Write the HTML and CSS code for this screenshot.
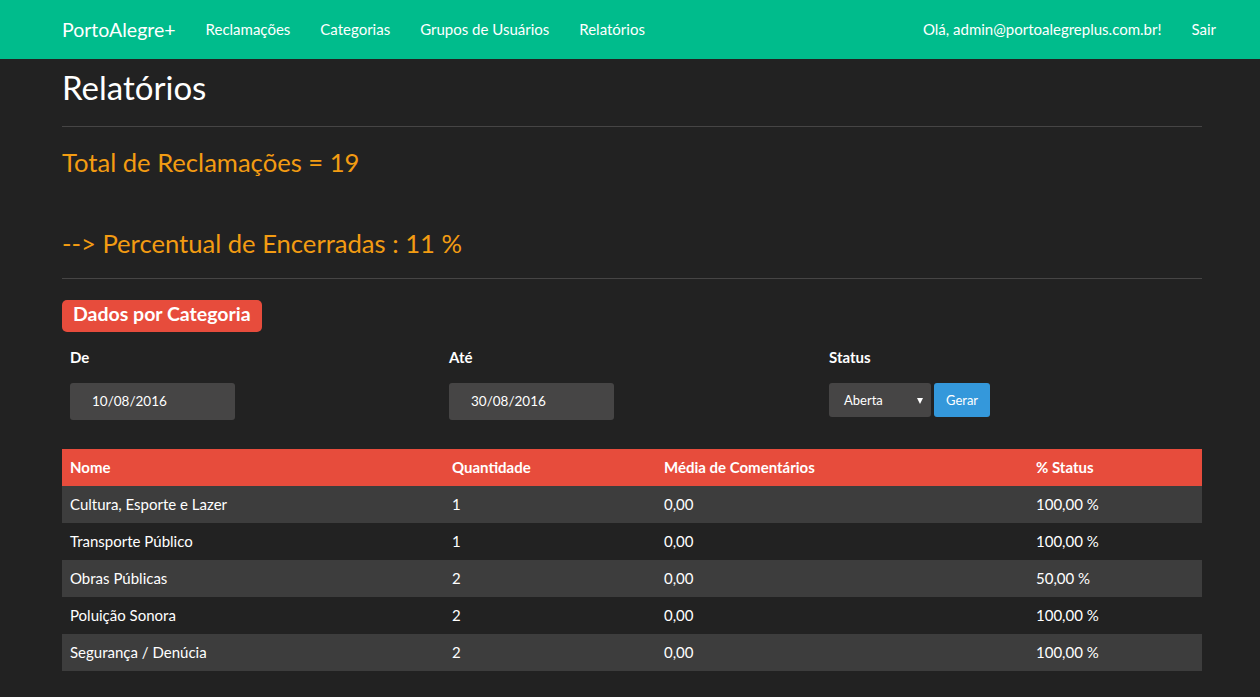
FILE: index.html
```html
<!DOCTYPE html>
<html lang="pt-BR">
<head>
<meta charset="utf-8">
<title>Relatórios</title>
<link rel="stylesheet" href="styles.css">
</head>
<body>
<nav class="navbar">
  <div class="nav-inner">
    <a class="brand" href="#">PortoAlegre+</a>
    <ul class="nav">
      <li><a href="#">Reclamações</a></li>
      <li><a href="#">Categorias</a></li>
      <li><a href="#">Grupos de Usuários</a></li>
      <li><a href="#">Relatórios</a></li>
    </ul>
    <ul class="nav nav-right">
      <li><a href="#">Olá, admin@portoalegreplus.com.br!</a></li>
      <li><a href="#">Sair</a></li>
    </ul>
  </div>
</nav>
<main class="container">
  <h1 class="page-title">Relatórios</h1>
  <hr class="rule rule-top">
  <h3 class="stat">Total de Reclamações = 19</h3>
  <h3 class="stat stat-second">--&gt; Percentual de Encerradas : 11 %</h3>
  <hr class="rule rule-mid">
  <h3 class="section"><span class="label">Dados por Categoria</span></h3>
  <form class="filters">
    <div class="field">
      <label>De</label>
      <div class="input">10/08/2016</div>
    </div>
    <div class="field">
      <label>Até</label>
      <div class="input">30/08/2016</div>
    </div>
    <div class="field">
      <label>Status</label>
      <div class="status-row">
        <div class="select">Aberta<span class="caret"></span></div>
        <button type="button" class="btn">Gerar</button>
      </div>
    </div>
  </form>
  <table class="table">
    <thead>
      <tr><th class="c1">Nome</th><th class="c2">Quantidade</th><th class="c3">Média de Comentários</th><th class="c4">% Status</th></tr>
    </thead>
    <tbody>
      <tr><td>Cultura, Esporte e Lazer</td><td>1</td><td>0,00</td><td>100,00 %</td></tr>
      <tr><td>Transporte Público</td><td>1</td><td>0,00</td><td>100,00 %</td></tr>
      <tr><td>Obras Públicas</td><td>2</td><td>0,00</td><td>50,00 %</td></tr>
      <tr><td>Poluição Sonora</td><td>2</td><td>0,00</td><td>100,00 %</td></tr>
      <tr><td>Segurança / Denúcia</td><td>2</td><td>0,00</td><td>100,00 %</td></tr>
    </tbody>
  </table>
</main>
</body>
</html>
```

FILE: styles.css
```css
* { box-sizing: border-box; }
html, body { margin: 0; padding: 0; }
body {
  background: #222222;
  color: #ffffff;
  font-family: Lato, "Liberation Sans", sans-serif;
  font-size: 15px;
  line-height: 1.428571;
}
a { color: #ffffff; text-decoration: none; }

.navbar {
  background: #00bc8c;
  height: 59px;
}
.nav-inner {
  display: flex;
  align-items: center;
  height: 59px;
  padding: 0 29px 0 62px;
}
.brand {
  font-size: 19.5px;
  margin-right: 15px;
}
.nav {
  display: flex;
  list-style: none;
  margin: 0;
  padding: 0;
}
.nav li a {
  display: block;
  padding: 0 15px;
  font-size: 15px;
}
.nav-right { margin-left: auto; }

.container {
  width: 1140px;
  margin-left: 62px;
}
.page-title {
  font-size: 33px;
  font-weight: 400;
  line-height: 1.1;
  margin: 0;
  padding-top: 10px;
  height: 67px;
}
.rule {
  border: 0;
  border-top: 1px solid #464545;
  margin: 0;
}
.stat {
  color: #f39c12;
  font-size: 25.6px;
  font-weight: 400;
  line-height: 1.1;
  margin: 0;
}
.rule-top + .stat { margin-top: 21px; }
.stat-second { margin-top: 53px; }
.rule-mid { margin-top: 21px; }
.section {
  margin: 18px 0 0;
  font-size: 26px;
  line-height: 1.1;
}
.label {
  display: inline-block;
  background: #e74c3c;
  color: #fff;
  font-size: 19.5px;
  font-weight: 700;
  line-height: 1;
  padding: 4px 11px 8px;
  border-radius: 5px;
}
.filters {
  display: grid;
  grid-template-columns: 379px 380px 380px;
  padding-left: 8px;
  margin-top: 15px;
}
.field label {
  display: block;
  font-weight: 700;
  font-size: 15px;
  margin-bottom: 15px;
}
.input {
  width: 165px;
  height: 37px;
  background: #464545;
  border-radius: 3px;
  padding: 0 0 0 22px;
  font-size: 13.5px;
  line-height: 37px;
}
.status-row { display: flex; align-items: flex-start; gap: 3px; }
.select {
  position: relative;
  width: 102px;
  height: 34px;
  background: #464545;
  border-radius: 3px;
  padding-left: 15px;
  font-size: 13px;
  line-height: 34px;
}
.caret {
  position: absolute;
  right: 8px;
  top: 15px;
  width: 0;
  height: 0;
  border-left: 3px solid transparent;
  border-right: 3px solid transparent;
  border-top: 6px solid #ffffff;
}
.btn {
  height: 34px;
  padding: 0 12px;
  background: #3498db;
  color: #fff;
  border: 0;
  border-radius: 3px;
  font-family: inherit;
  font-size: 13px;
}

.table {
  width: 1140px;
  border-collapse: collapse;
  margin-top: 29px;
  table-layout: fixed;
}
.table th, .table td {
  text-align: left;
  padding: 0 8px;
  height: 37px;
  font-size: 15px;
}
.table th { background: #e74c3c; font-weight: 700; }
.table .c1 { width: 382px; }
.table .c2 { width: 212px; }
.table .c3 { width: 372px; }
.table .c4 { width: 174px; }
.table tbody tr:nth-child(odd) td { background: #3d3d3d; }
```
